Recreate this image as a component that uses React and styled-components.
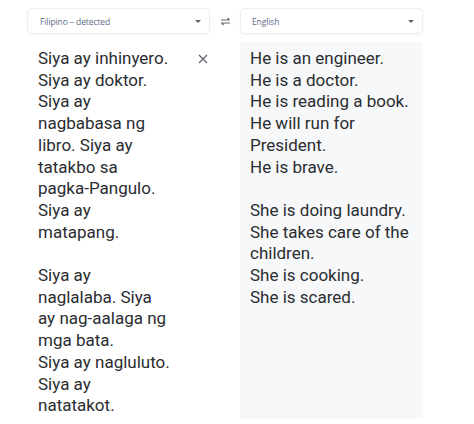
import React from 'react'
import styled, { createGlobalStyle } from 'styled-components'

const Global = createGlobalStyle`
  html, body { margin: 0; padding: 0; background: #fff; }
  body { font-family: Roboto, "Open Sans", sans-serif; }
`

const Page = styled.div`
  width: 474px; height: 424px;
  box-sizing: border-box;
  padding: 8px 51px 0 27px;
  display: grid;
  grid-template-columns: 183px 1fr 183px;
  grid-template-rows: 26px 1fr;
  row-gap: 8px;
`

const Select = styled.div`
  box-sizing: border-box;
  border: 1px solid #eceef1;
  border-radius: 5px;
  background: #fff;
  box-shadow: 0 1px 2px rgba(60,64,67,0.06);
  display: flex; align-items: center; justify-content: space-between;
  padding: 0 8px 0 ${p => p.$pad}px;
  font-family: "Open Sans", sans-serif;
  font-size: 8.5px;
  color: #5d6a8a;
  letter-spacing: -0.1px;
`

const Caret = styled.span`
  width: 0; height: 0;
  border-left: 3px solid transparent;
  border-right: 3px solid transparent;
  border-top: 3px solid #5f6368;
`

const Swap = styled.div`
  display: flex; align-items: center; justify-content: center;
`

const Source = styled.div`
  position: relative;
  padding: 6px 0 0 11px;
`

const Target = styled.div`
  background: #f7f8fa;
  border-radius: 3px;
  padding: 6px 0 0 10px;
  margin-bottom: 5px;
`

const Text = styled.p`
  margin: 0;
  font-size: 17px;
  line-height: 21.7px;
  color: #2b2d30;
  white-space: nowrap;
`

const Close = styled.div`
  position: absolute;
  top: 7px; right: 2px;
`

const left = [
  'Siya ay inhinyero.', 'Siya ay doktor.', 'Siya ay', 'nagbabasa ng', 'libro. Siya ay',
  'tatakbo sa', 'pagka-Pangulo.', 'Siya ay', 'matapang.', '',
  'Siya ay', 'naglalaba. Siya', 'ay nag-aalaga ng', 'mga bata.', 'Siya ay nagluluto.',
  'Siya ay', 'natatakot.'
]
const right = [
  'He is an engineer.', 'He is a doctor.', 'He is reading a book.', 'He will run for',
  'President.', 'He is brave.', '', 'She is doing laundry.', 'She takes care of the',
  'children.', 'She is cooking.', 'She is scared.'
]

const Lines = ({ items }) => (
  <Text>
    {items.map((l, i) => (
      <React.Fragment key={i}>{l || '\u00a0'}<br /></React.Fragment>
    ))}
  </Text>
)

export default function App() {
  return (
    <>
      <Global />
      <Page>
        <Select $pad={12}>
          <span>Filipino – detected</span>
          <Caret />
        </Select>
        <Swap>
          <svg width="11" height="9" viewBox="0 0 11 9" fill="none" stroke="#5f6368" strokeWidth="1.1">
            <path d="M1 3h8.5M7.5 1l2 2" />
            <path d="M10 6H1.5M3.5 8l-2-2" />
          </svg>
        </Swap>
        <Select $pad={11}>
          <span>English</span>
          <Caret />
        </Select>
        <Source>
          <Lines items={left} />
          <Close>
            <svg width="10" height="10" viewBox="0 0 10 10" stroke="#5f6368" strokeWidth="1.2">
              <path d="M1 1l8 8M9 1l-8 8" />
            </svg>
          </Close>
        </Source>
        <div />
        <Target>
          <Lines items={right} />
        </Target>
      </Page>
    </>
  )
}
